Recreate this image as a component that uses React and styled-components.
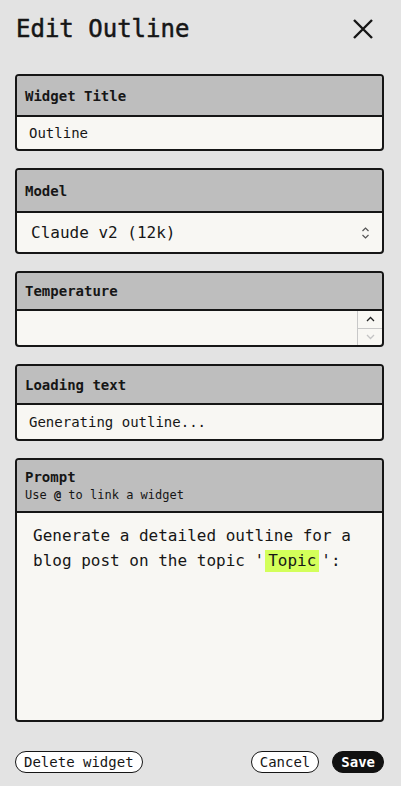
import React from "react";
import styled, { createGlobalStyle } from "styled-components";

const Global = createGlobalStyle`
  html, body { margin: 0; padding: 0; background: #e3e3e3; }
  body { font-family: "DejaVu Sans Mono", "Liberation Mono", monospace; color: #161616; }
  * { box-sizing: border-box; }
`;

const Page = styled.div`
  height: 786px;
  display: flex;
  flex-direction: column;
  padding: 0 17px 13px 15px;
  background: #e3e3e3;
`;

const TopBar = styled.div`
  height: 58px;
  display: flex;
  align-items: center;
  justify-content: space-between;
  margin-bottom: 16px;
`;

const Title = styled.h1`
  margin: 0 0 0 1px;
  font-size: 24px;
  font-weight: 500;
  -webkit-text-stroke: 0.5px #161616;
  line-height: 1;
`;

const CloseButton = styled.button`
  border: none;
  background: none;
  padding: 0;
  width: 24px;
  height: 24px;
  margin-right: 9px;
  display: flex;
  align-items: center;
  justify-content: center;
  cursor: pointer;
`;

const Fields = styled.div`
  display: flex;
  flex-direction: column;
  gap: 17px;
  flex: 1;
`;

const Card = styled.div`
  border: 2px solid #161616;
  border-radius: 4px;
  background: #f8f7f3;
  overflow: hidden;
  display: flex;
  flex-direction: column;
  ${(p) => (p.$grow ? "flex: 1;" : "")}
`;

const CardHeader = styled.div`
  background: #bebebe;
  border-bottom: 2px solid #161616;
  height: ${(p) => p.$h + 2}px;
  padding: 0 8px;
  display: flex;
  flex-direction: column;
  justify-content: center;
`;

const Label = styled.div`
  font-size: 14px;
  font-weight: bold;
  line-height: 18px;
`;

const Hint = styled.div`
  font-size: 12px;
  line-height: 16px;
  margin-top: 1px;
`;

const At = styled.span`
  font-weight: bold;
`;

const Body = styled.div`
  height: ${(p) => p.$h}px;
  display: flex;
  align-items: center;
  padding: 0 12px;
  font-size: ${(p) => p.$size || 14}px;
`;

const SelectBody = styled(Body)`
  padding: 0 12px 0 14px;
  justify-content: space-between;
`;

const NumberBody = styled(Body)`
  padding: 0;
  justify-content: flex-end;
`;

const Spinner = styled.div`
  width: 25px;
  height: 100%;
  border-left: 1px solid #c8c8c8;
  display: flex;
  flex-direction: column;
`;

const SpinHalf = styled.div`
  flex: 1;
  display: flex;
  align-items: center;
  justify-content: center;
  & + & { border-top: 1px solid #c8c8c8; }
`;

const PromptBody = styled.div`
  flex: 1;
  padding: 10px 15px 7px 16px;
  font-size: 16px;
  line-height: 25px;
`;

const Highlight = styled.span`
  display: inline-block;
  background: #d3ff5a;
  line-height: 22px;
  padding: 0 3px;
  margin: 0 2px 0 1px;
`;

const Footer = styled.div`
  display: flex;
  align-items: center;
  justify-content: space-between;
  padding-top: 29px;
`;

const Actions = styled.div`
  display: flex;
  gap: 13px;
`;

const Pill = styled.button`
  font-family: "DejaVu Sans Mono", "Liberation Mono", monospace;
  font-size: 14px;
  line-height: 19px;
  height: 22px;
  padding: 0 8px;
  border-radius: 11px;
  border: 1px solid ${(p) => (p.$dark ? "#111" : "#161616")};
  background: ${(p) => (p.$dark ? "#111" : "#fff")};
  color: ${(p) => (p.$dark ? "#fff" : "#161616")};
  font-weight: ${(p) => (p.$dark ? "bold" : "normal")};
  cursor: pointer;
`;

const Chevron = ({ up, color = "#222" }) => (
  <svg width="9" height="6" viewBox="0 0 9 6" fill="none">
    <path d={up ? "M1 5L4.5 1.5L8 5" : "M1 1L4.5 4.5L8 1"} stroke={color} strokeWidth="1.3" />
  </svg>
);

export default function App() {
  return (
    <>
      <Global />
      <Page>
        <TopBar>
          <Title>Edit Outline</Title>
          <CloseButton aria-label="Close">
            <svg width="22" height="22" viewBox="0 0 22 22">
              <path d="M2 2L20 20M20 2L2 20" stroke="#161616" strokeWidth="2.4" />
            </svg>
          </CloseButton>
        </TopBar>
        <Fields>
          <Card>
            <CardHeader $h={39}><Label>Widget Title</Label></CardHeader>
            <Body $h={32}>Outline</Body>
          </Card>
          <Card>
            <CardHeader $h={41}><Label>Model</Label></CardHeader>
            <SelectBody $h={39} $size={16}>
              <span>Claude v2 (12k)</span>
              <svg width="9" height="14" viewBox="0 0 9 14" fill="none">
                <path d="M1.5 5L4.5 2L7.5 5M1.5 9L4.5 12L7.5 9" stroke="#555" strokeWidth="1.2" />
              </svg>
            </SelectBody>
          </Card>
          <Card>
            <CardHeader $h={36}><Label>Temperature</Label></CardHeader>
            <NumberBody $h={34}>
              <Spinner>
                <SpinHalf><Chevron up /></SpinHalf>
                <SpinHalf><Chevron color="#c4c4c4" /></SpinHalf>
              </Spinner>
            </NumberBody>
          </Card>
          <Card>
            <CardHeader $h={37}><Label>Loading text</Label></CardHeader>
            <Body $h={34}>Generating outline...</Body>
          </Card>
          <Card $grow>
            <CardHeader $h={51}>
              <Label>Prompt</Label>
              <Hint>Use <At>@</At> to link a widget</Hint>
            </CardHeader>
            <PromptBody>
              Generate a detailed outline for a blog post on the topic '<Highlight>Topic</Highlight>':
            </PromptBody>
          </Card>
        </Fields>
        <Footer>
          <Pill>Delete widget</Pill>
          <Actions>
            <Pill>Cancel</Pill>
            <Pill $dark>Save</Pill>
          </Actions>
        </Footer>
      </Page>
    </>
  );
}
